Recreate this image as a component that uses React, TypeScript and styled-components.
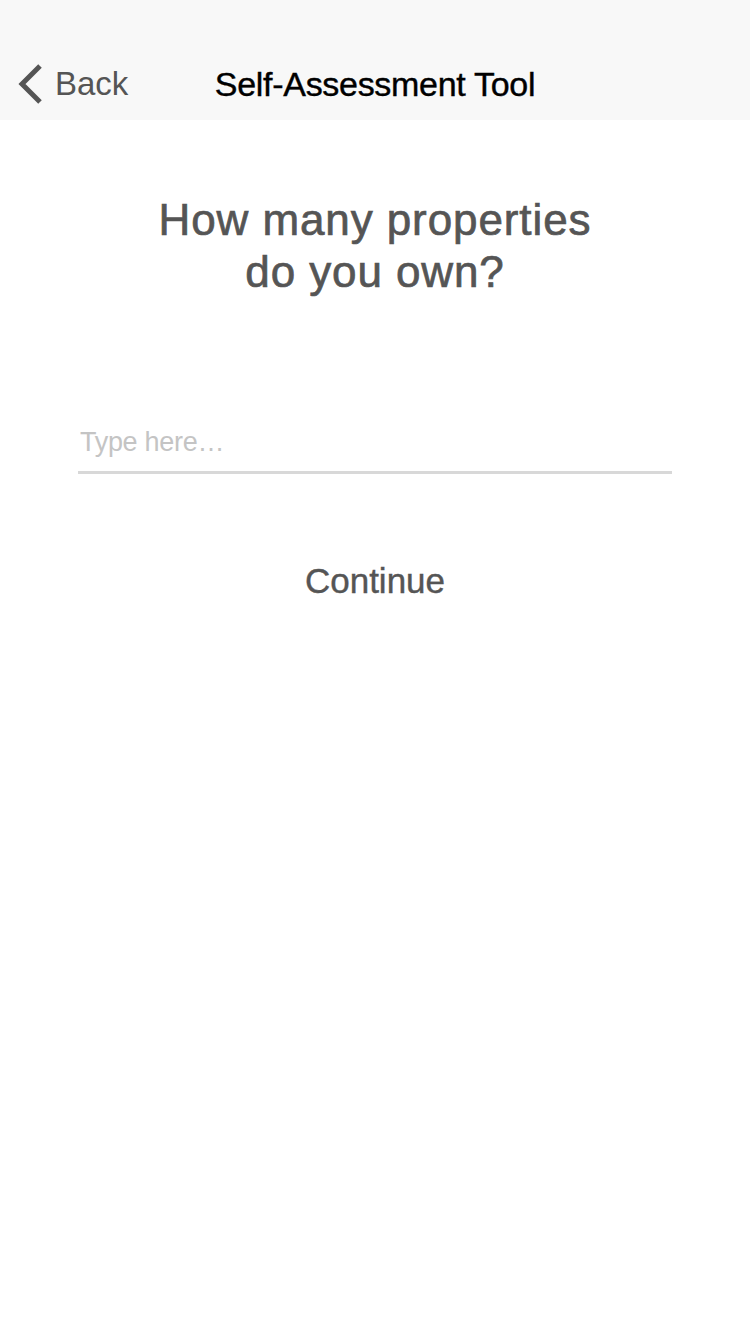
import React from "react";
import styled, { createGlobalStyle } from "styled-components";

const Global = createGlobalStyle`
  html, body { margin: 0; padding: 0; background: #ffffff; }
  body { font-family: "Liberation Sans", Arial, Helvetica, sans-serif; }
  * { box-sizing: border-box; }
`;

const Screen = styled.div`
  width: 750px;
  min-height: 1334px;
  background: #ffffff;
  display: flex;
  flex-direction: column;
`;

const NavBar = styled.header`
  height: 120px;
  background: #f8f8f8;
  padding-top: 48px;
  display: grid;
  grid-template-columns: 180px 1fr 180px;
  align-items: center;
`;

const BackButton = styled.button`
  display: flex;
  align-items: center;
  gap: 12px;
  padding: 0 0 0 17px;
  border: none;
  background: none;
  color: #555555;
  font-family: "Liberation Sans", Arial, sans-serif;
  font-size: 33px;
  cursor: pointer;
  height: 72px;
`;

const NavTitle = styled.h1`
  margin: 0;
  text-align: center;
  font-size: 34px;
  font-weight: 400;
  color: #000000;
  letter-spacing: -0.3px;
  white-space: nowrap;
  -webkit-text-stroke: 0.4px #000;
`;

const Content = styled.main`
  display: flex;
  flex-direction: column;
  align-items: center;
  padding: 0 78px;
`;

const Question = styled.h2`
  margin: 74px 0 0;
  text-align: center;
  font-size: 44px;
  line-height: 52px;
  letter-spacing: 0.9px;
  font-weight: 400;
  color: #555555;
  -webkit-text-stroke: 0.7px #555555;
`;

const Field = styled.input`
  margin-top: 125px;
  width: 100%;
  border: none;
  border-bottom: 3px solid #d8d8d8;
  outline: none;
  background: transparent;
  padding: 0 0 10px 2px;
  font-family: "Liberation Sans", Arial, sans-serif;
  font-size: 27px;
  height: 51px;
  color: #333;
  &::placeholder {
    color: #c4c4c4;
    letter-spacing: -0.3px;
  }
`;

const ContinueButton = styled.button`
  margin-top: 87px;
  border: none;
  background: none;
  font-family: "Liberation Sans", Arial, sans-serif;
  font-size: 35px;
  color: #555555;
  -webkit-text-stroke: 0.4px #555555;
  cursor: pointer;
  padding: 0;
`;

const Chevron = () => (
  <svg width="26" height="40" viewBox="0 0 26 40" fill="none">
    <path d="M23 2 L5 20 L23 38" stroke="#555555" strokeWidth="5" strokeLinecap="butt" strokeLinejoin="miter" />
  </svg>
);

export default function App() {
  return (
    <>
      <Global />
      <Screen>
        <NavBar>
          <BackButton>
            <Chevron />
            <span>Back</span>
          </BackButton>
          <NavTitle>Self-Assessment Tool</NavTitle>
          <div />
        </NavBar>
        <Content>
          <Question>
            How many properties
            <br />
            do you own?
          </Question>
          <Field placeholder="Type here…" />
          <ContinueButton>Continue</ContinueButton>
        </Content>
      </Screen>
    </>
  );
}
